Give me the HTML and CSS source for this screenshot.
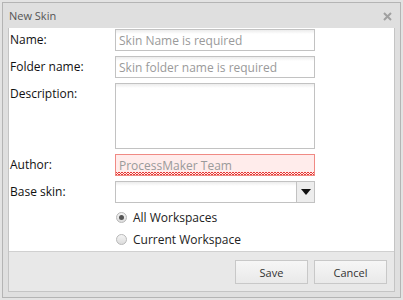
FILE: index.html
```html
<!DOCTYPE html>
<html lang="en">
<head>
  <meta charset="UTF-8">
  <title>New Skin</title>
  <link rel="stylesheet" href="styles.css">
</head>
<body>
  <div class="window">
    <div class="window-header">
      <span class="window-title">New Skin</span>
      <svg class="window-close" width="9" height="9" viewBox="0 0 9 9">
        <path d="M1 1 L8 8 M8 1 L1 8" stroke="#a0a0a0" stroke-width="2"/>
      </svg>
    </div>
    <div class="window-panel">
      <form class="skin-form">
        <div class="form-row">
          <label class="form-label">Name:</label>
          <input class="form-input" type="text" placeholder="Skin Name is required">
        </div>
        <div class="form-row">
          <label class="form-label">Folder name:</label>
          <input class="form-input" type="text" placeholder="Skin folder name is required">
        </div>
        <div class="form-row">
          <label class="form-label">Description:</label>
          <textarea class="form-input form-textarea"></textarea>
        </div>
        <div class="form-row">
          <label class="form-label">Author:</label>
          <div class="invalid-wrap">
            <input class="form-input form-invalid" type="text" placeholder="ProcessMaker Team">
          </div>
        </div>
        <div class="form-row">
          <label class="form-label">Base skin:</label>
          <div class="combo">
            <input class="combo-input" type="text">
            <span class="combo-trigger">
              <svg width="10" height="6" viewBox="0 0 10 6"><path d="M0 0 H10 L5 6 Z" fill="#111"/></svg>
            </span>
          </div>
        </div>
        <div class="radio-group">
          <label class="radio-item"><input type="radio" name="scope" checked><span>All Workspaces</span></label>
          <label class="radio-item"><input type="radio" name="scope"><span>Current Workspace</span></label>
        </div>
      </form>
      <div class="window-footer">
        <button class="btn" type="button">Save</button>
        <button class="btn" type="button">Cancel</button>
      </div>
    </div>
  </div>
</body>
</html>
```

FILE: styles.css
```css
body {
  margin: 0;
  padding: 2px;
  background: #e3e3e3;
  font-family: "Open Sans", "DejaVu Sans", sans-serif;
}
.window {
  width: 387px;
  height: 289px;
  border: 1px solid #b4b4b4;
  background: #dfdfdf;
  padding: 0 5px 5px 5px;
  display: flex;
  flex-direction: column;
}
.window-header {
  height: 25px;
  flex: none;
  display: flex;
  align-items: center;
  justify-content: space-between;
  padding: 0 3px 0 1px;
}
.window-title {
  font-size: 11px;
  color: #555;
}
.window-close {
  margin-top: 1px;
}
.window-panel {
  flex: 1;
  border: 1px solid #c4c4c4;
  border-top: none;
  background: #e8e8e8;
  display: flex;
  flex-direction: column;
}
.skin-form {
  background: #fff;
  height: 224px;
  flex: none;
  border-bottom: 1px solid #d0d0d0;
  padding: 1px 0 0 1px;
  margin: 0;
  box-sizing: border-box;
}
.form-row {
  display: flex;
  align-items: flex-start;
  margin-bottom: 5px;
}
.form-label {
  width: 105px;
  font-size: 12px;
  line-height: 22px;
  color: #111;
}
.form-input {
  width: 200px;
  height: 22px;
  box-sizing: border-box;
  border: 1px solid #c2c2c2;
  padding: 0 3px;
  margin: 0;
  font-family: inherit;
  font-size: 12px;
  color: #333;
  background: linear-gradient(#ececec, #fff 4px);
  outline: none;
}
.form-input::placeholder {
  color: #9a9a9a;
}
.form-textarea {
  height: 66px;
  resize: none;
  padding: 2px 3px;
}
.invalid-wrap {
  position: relative;
}
.form-invalid {
  display: block;
  border-color: #f08a84;
  background: #ffeceb;
}
.invalid-wrap::after {
  content: "";
  position: absolute;
  left: 1px;
  right: 1px;
  bottom: 1px;
  height: 3px;
  background:
    linear-gradient(45deg, transparent 40%, #e53935 40%, #e53935 60%, transparent 60%) 0 0 / 3px 3px repeat-x,
    linear-gradient(-45deg, transparent 40%, #e53935 40%, #e53935 60%, transparent 60%) 0 0 / 3px 3px repeat-x;
}
.combo {
  display: flex;
  width: 200px;
  height: 22px;
  border: 1px solid #c2c2c2;
  box-sizing: border-box;
}
.combo-input {
  flex: 1;
  min-width: 0;
  border: none;
  margin: 0;
  padding: 0 3px;
  background: linear-gradient(#ececec, #fff 4px);
  outline: none;
}
.combo-trigger {
  width: 17px;
  border-left: 1px solid #c2c2c2;
  background: #ededed;
  display: flex;
  align-items: center;
  justify-content: center;
}
.radio-group {
  margin-top: -2px;
  padding-left: 106px;
  display: flex;
  flex-direction: column;
}
.radio-item {
  display: flex;
  align-items: center;
  height: 22px;
  font-size: 12px;
  color: #222;
}
.radio-item input {
  appearance: none;
  -webkit-appearance: none;
  width: 11px;
  height: 11px;
  margin: 0 6px 0 0;
  border: 1px solid #b8b8b8;
  border-radius: 50%;
  background: linear-gradient(#f4f4f4, #dcdcdc);
  box-sizing: border-box;
  position: relative;
}
.radio-item input:checked::after {
  content: "";
  position: absolute;
  left: 2px;
  top: 2px;
  width: 5px;
  height: 5px;
  border-radius: 50%;
  background: #555;
}
.window-footer {
  flex: 1;
  display: flex;
  justify-content: flex-end;
  align-items: flex-start;
  gap: 6px;
  padding: 8px 7px 0 0;
}
.btn {
  width: 73px;
  height: 24px;
  border: 1px solid #c8c8c8;
  background: linear-gradient(#f6f6f6, #e9e9e9);
  font-family: inherit;
  font-size: 11px;
  color: #333;
  padding: 0;
  cursor: pointer;
}
```
